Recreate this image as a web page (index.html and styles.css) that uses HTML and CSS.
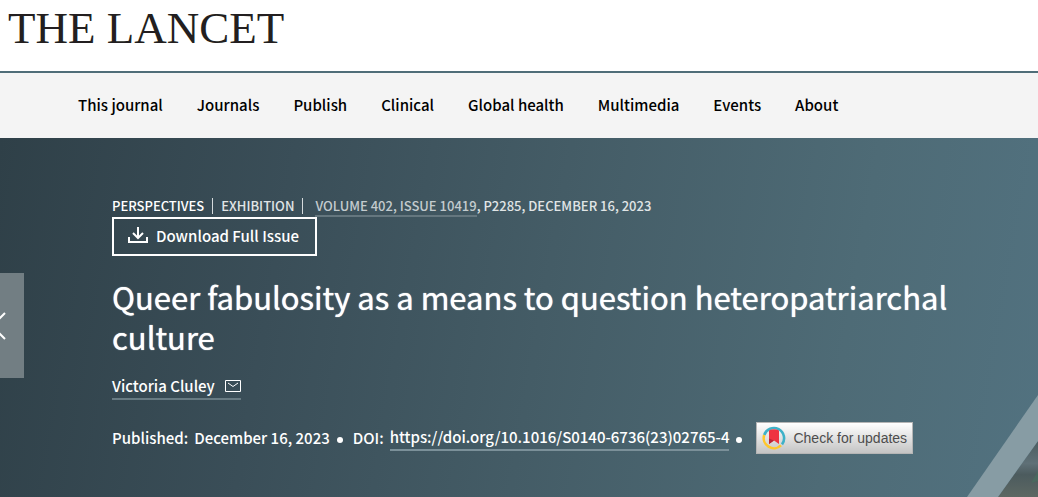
FILE: index.html
```html
<!DOCTYPE html>
<html lang="en">
<head>
<meta charset="utf-8">
<meta name="viewport" content="width=device-width, initial-scale=1">
<title>Queer fabulosity as a means to question heteropatriarchal culture - The Lancet</title>
<link rel="stylesheet" href="styles.css">
</head>
<body>
<header class="masthead">
  <a class="logo" href="#">THE LANCET</a>
</header>
<nav class="main-nav">
  <a href="#">This journal</a>
  <a href="#">Journals</a>
  <a href="#">Publish</a>
  <a href="#">Clinical</a>
  <a href="#">Global health</a>
  <a href="#">Multimedia</a>
  <a href="#">Events</a>
  <a href="#">About</a>
</nav>
<main class="hero">
  <svg class="slash" viewBox="0 0 71 102" aria-hidden="true">
    <defs>
      <linearGradient id="photo" x1="0" y1="0" x2="0" y2="1">
        <stop offset="0" stop-color="#4c5d60"/>
        <stop offset=".4" stop-color="#5f7077"/>
        <stop offset=".6" stop-color="#4c5b5e"/>
        <stop offset="1" stop-color="#5d6863"/>
      </linearGradient>
    </defs>
    <path d="M71 46V102H31Z" fill="url(#photo)"/>
    <path d="M71 76V86L64 88Z" fill="#47705f" opacity=".6"/>
    <path d="M71 0V46L31 102H0Z" fill="#879ca4"/>
  </svg>
  <button class="previous" type="button" aria-label="Previous article">
    <svg width="6" height="28" viewBox="0 0 6 28"><path d="M5 1L-8 14L5 27" fill="none" stroke="#fff" stroke-width="2"/></svg>
  </button>
  <div class="crumbs">
    <span class="section">PERSPECTIVES</span><span class="bar"></span><span>EXHIBITION</span><span class="bar bar-wide"></span><span><a class="issue" href="#">VOLUME 402, ISSUE 10419</a>, P2285, DECEMBER 16, 2023</span>
  </div>
  <button class="download" type="button">
    <svg width="20" height="18" viewBox="0 0 20 18" fill="none" stroke="#fff" stroke-width="2"><path d="M1 10V15H19V10M10 0V10M5 6L10 11L15 6"/></svg>
    Download Full Issue
  </button>
  <h1 class="title">Queer fabulosity as a means to question heteropatriarchal culture</h1>
  <div class="authors">
    <a class="author" href="#">Victoria Cluley
      <svg width="16" height="12" viewBox="0 0 16 12" fill="none" stroke="#fff"><path d="M.5 .5H15.5V11.5H.5ZM3 3L8 6.5L13 3"/></svg>
    </a>
  </div>
  <div class="publication">
    <span class="label">Published:</span><span>December 16, 2023</span>
    <span class="dot"></span>
    <span class="label">DOI:</span><a class="doi" href="#">https://doi.org/10.1016/S0140-6736(23)02765-4</a>
    <span class="dot"></span>
    <button class="updates" type="button">
      <svg width="24" height="24" viewBox="0 0 24 24">
        <g fill="none" stroke-width="2.6">
          <path d="M2.2 9A10.2 10.2 0 1 1 20 18.4" stroke="#3eb1c8"/>
          <path d="M2.2 9A10.2 10.2 0 0 0 19 19.4" stroke="#ffc72c"/>
        </g>
        <path d="M7 4.5Q12 2 17 4.5V18L12 14.5L7 18Z" fill="#ef3340"/>
        <path d="M7 12.5L12 14.5L7 18Z" fill="#b92636"/>
      </svg>
      Check for updates
    </button>
  </div>
</main>
</body>
</html>
```
FILE: styles.css
```css
* { box-sizing: border-box; }

body {
  margin: 0;
  min-height: 100vh;
  display: flex;
  flex-direction: column;
  font-family: "Noto Sans CJK SC", "Open Sans", sans-serif;
  font-size: 15px;
  line-height: 24px;
  font-weight: 500;
}

a { color: inherit; text-decoration: none; }

button {
  font: inherit;
  color: inherit;
  cursor: pointer;
}

.masthead {
  padding: 3px 8px 18px;
  background: #fff;
  border-bottom: 2px solid #4f6d78;
}

.logo {
  display: block;
  font-family: "Liberation Serif", serif;
  font-size: 45px;
  font-weight: 400;
  line-height: 50px;
  color: #231f20;
}

.main-nav {
  display: flex;
  flex-wrap: wrap;
  gap: 0 34px;
  padding: 20px 78px 21px;
  background: #f4f4f4;
  color: #000;
}

.hero {
  position: relative;
  flex: 1;
  padding: 57px 40px 40px 112px;
  color: #fff;
  background: linear-gradient(100deg, #2f4048 0%, #3a4e58 27%, #445c66 52%, #4e6b76 80%, #527280 100%);
}

.slash {
  position: absolute;
  right: 0;
  bottom: 0;
  width: 71px;
  height: 102px;
}

.previous {
  position: absolute;
  left: 0;
  top: 135px;
  width: 24px;
  height: 105px;
  padding: 0;
  border: 0;
  display: flex;
  align-items: center;
  background: #727e83;
}

.crumbs {
  display: flex;
  flex-wrap: wrap;
  align-items: center;
  font-size: 13px;
  line-height: 22px;
  color: #e0e5e6;
}

.section { color: #fff; }

.bar {
  width: 1px;
  height: 16px;
  margin: 0 8px;
  background: #d5dadc;
}

.bar-wide { margin-right: 12px; }

.issue {
  color: #c3cbce;
  border-bottom: 2px solid #65777f;
}

.download {
  display: flex;
  align-items: center;
  gap: 8px;
  padding: 5px 16px 6px 14px;
  border: 2px solid #fff;
  background: none;
}

.title {
  margin: 21px 0 0;
  font-size: 31px;
  line-height: 40px;
  font-weight: 400;
  text-shadow: 0 0 1px #fff;
}

.authors {
  display: flex;
  margin-top: 17px;
}

.author {
  display: flex;
  align-items: center;
  gap: 10px;
  border-bottom: 2px solid #687b83;
}

.publication {
  display: flex;
  flex-wrap: wrap;
  align-items: center;
  margin-top: 22px;
}

.label { margin-right: 6px; }

.dot {
  width: 6px;
  height: 6px;
  margin: 4px 10px 0 7px;
  border-radius: 50%;
  background: #fff;
}

.doi { border-bottom: 2px solid #7b9099; }

.updates {
  display: flex;
  align-items: center;
  gap: 7px;
  padding: 3px 5px;
  margin-left: 4px;
  border: 1px solid #b5b5b5;
  background: linear-gradient(#fff, #c4c4c4);
  color: #4d4d4d;
  font-family: "Liberation Sans", Arial, sans-serif;
  font-size: 14px;
  font-weight: 400;
}
```
